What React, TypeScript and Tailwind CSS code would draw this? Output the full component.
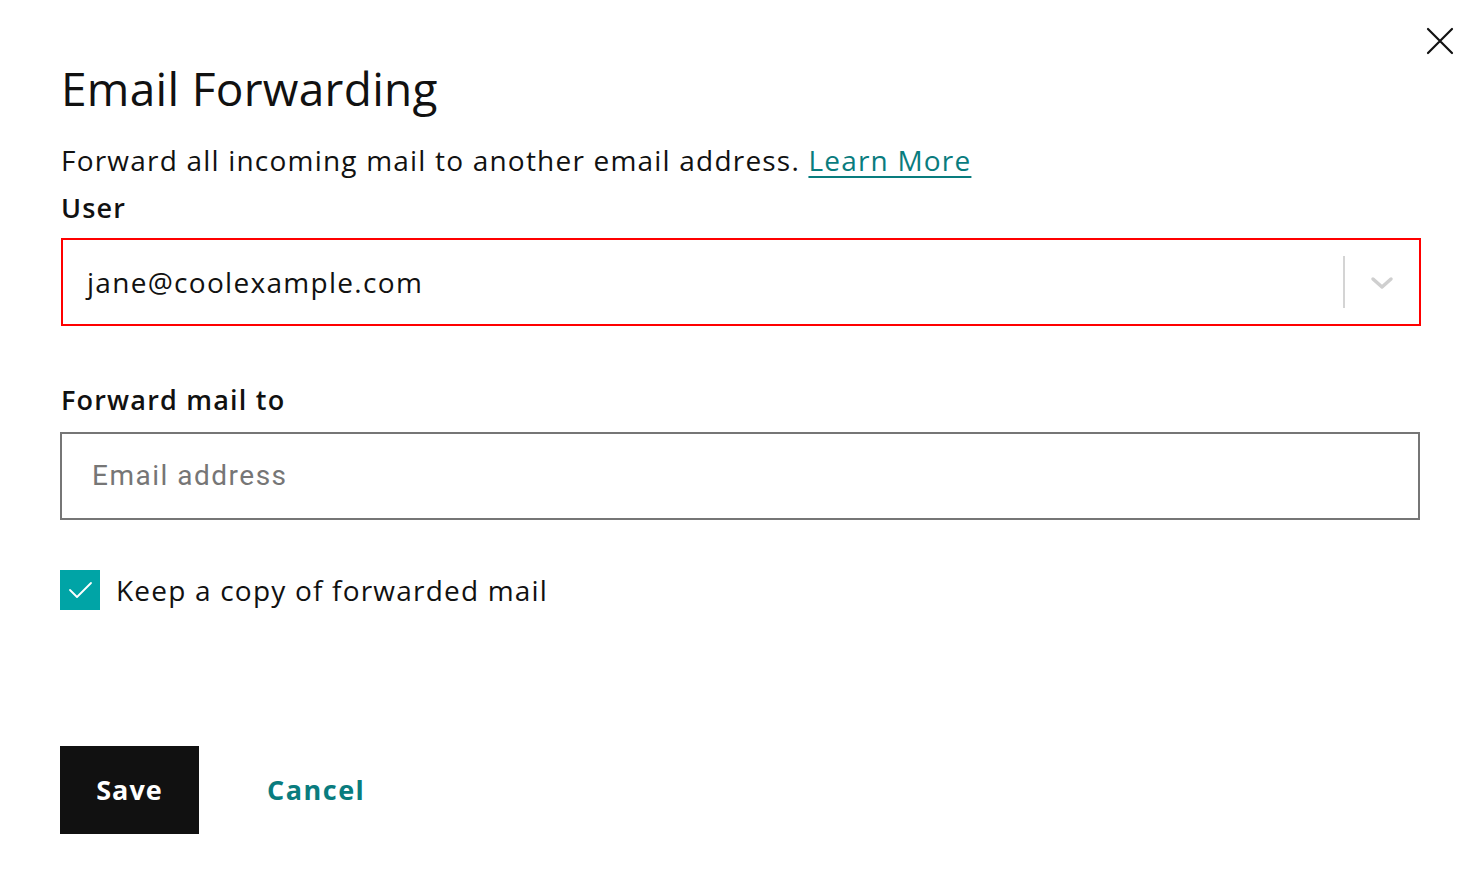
import React from "react";

export default function App() {
  return (
    <div className="relative w-[1484px] h-[896px] bg-white text-[#111111]" style={{ fontFamily: "'Open Sans', 'Noto Sans', sans-serif" }}>
      <button className="absolute left-[1424px] top-[25px] w-[32px] h-[32px] flex items-center justify-center">
        <svg width="30" height="30" viewBox="0 0 30 30" fill="none" stroke="#111" strokeWidth="2.2" strokeLinecap="round">
          <path d="M3 3 L27 27 M27 3 L3 27" />
        </svg>
      </button>
      <div className="pl-[61px] pr-[63px] pt-[58px] flex flex-col">
        <h1 className="text-[46px] leading-[60px] font-normal tracking-[0.3px]">Email Forwarding</h1>
        <p className="mt-[22px] text-[28px] leading-[40px] tracking-[1.2px]">
          Forward all incoming mail to another email address.{" "}
          <a className="text-[#097c7e] underline underline-offset-[5px] decoration-[2px]">Learn More</a>
        </p>
        <label className="mt-[11px] text-[27px] leading-[34px] font-semibold tracking-[1.2px]">User</label>
        <div className="mt-[13px] h-[88px] border-2 border-[#ff0000] flex items-center">
          <span className="flex-1 pl-[24px] text-[28px] tracking-[1.3px]">jane@coolexample.com</span>
          <div className="w-[2px] h-[52px] bg-[#d4d4d4]" />
          <div className="w-[74px] flex items-center justify-center pt-[2px]">
            <svg width="26" height="16" viewBox="0 0 26 16" fill="none" stroke="#cfcfcf" strokeWidth="3.5" strokeLinecap="round" strokeLinejoin="round">
              <path d="M4 4 L13 12 L22 4" />
            </svg>
          </div>
        </div>
        <label className="mt-[57px] text-[27px] leading-[34px] font-semibold tracking-[1.2px]">Forward mail to</label>
        <div className="mt-[15px] h-[88px] border-2 border-[#767676] flex items-center -ml-[1px] mr-[1px]">
          <span className="pl-[30px] text-[28px] text-[#767676] tracking-[1.5px]" style={{ fontFamily: "Roboto, sans-serif" }}>Email address</span>
        </div>
        <div className="mt-[49px] flex items-center -ml-[1px]">
          <div className="w-[40px] h-[40px] bg-[#00a4a6] flex items-center justify-center">
            <svg width="28" height="22" viewBox="0 0 28 22" fill="none" stroke="white" strokeWidth="1.8" strokeLinecap="round" strokeLinejoin="round">
              <path d="M4 11 L11 18 L25 4" />
            </svg>
          </div>
          <span className="ml-[16px] text-[28px] tracking-[1.2px]">Keep a copy of forwarded mail</span>
        </div>
        <div className="mt-[135px] flex items-center -ml-[1px]">
          <button className="w-[139px] h-[88px] bg-[#111111] text-white text-[27px] font-bold tracking-[1px]">Save</button>
          <button className="ml-[68px] text-[#097c7e] text-[27px] font-bold tracking-[1.5px]">Cancel</button>
        </div>
      </div>
    </div>
  );
}
